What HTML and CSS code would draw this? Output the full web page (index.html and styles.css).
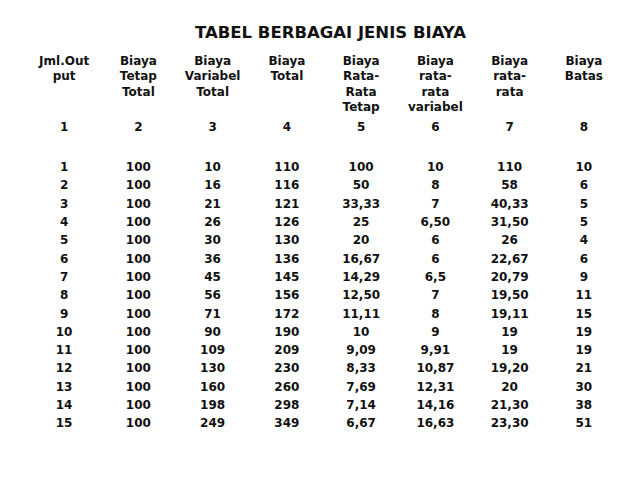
FILE: index.html
```html
<!DOCTYPE html>
<html lang="id">
<head>
<meta charset="utf-8">
<title>Tabel Berbagai Jenis Biaya</title>
<link rel="stylesheet" href="styles.css">
</head>
<body>
<div class="page">
  <h1 class="title">TABEL BERBAGAI JENIS BIAYA</h1>
  <table class="cost-table">
    <thead>
      <tr class="head-row">
        <th>Jml.Out<br>put</th>
        <th>Biaya<br>Tetap<br>Total</th>
        <th>Biaya<br>Variabel<br>Total</th>
        <th>Biaya<br>Total</th>
        <th>Biaya<br>Rata-<br>Rata<br>Tetap</th>
        <th>Biaya<br>rata-<br>rata<br>variabel</th>
        <th>Biaya<br>rata-<br>rata</th>
        <th>Biaya<br>Batas</th>
      </tr>
      <tr class="num-row">
        <th>1</th><th>2</th><th>3</th><th>4</th><th>5</th><th>6</th><th>7</th><th>8</th>
      </tr>
      <tr class="spacer-row"><th colspan="8"></th></tr>
    </thead>
    <tbody>
      <tr><td>1</td><td>100</td><td>10</td><td>110</td><td>100</td><td>10</td><td>110</td><td>10</td></tr>
      <tr><td>2</td><td>100</td><td>16</td><td>116</td><td>50</td><td>8</td><td>58</td><td>6</td></tr>
      <tr><td>3</td><td>100</td><td>21</td><td>121</td><td>33,33</td><td>7</td><td>40,33</td><td>5</td></tr>
      <tr><td>4</td><td>100</td><td>26</td><td>126</td><td>25</td><td>6,50</td><td>31,50</td><td>5</td></tr>
      <tr><td>5</td><td>100</td><td>30</td><td>130</td><td>20</td><td>6</td><td>26</td><td>4</td></tr>
      <tr><td>6</td><td>100</td><td>36</td><td>136</td><td>16,67</td><td>6</td><td>22,67</td><td>6</td></tr>
      <tr><td>7</td><td>100</td><td>45</td><td>145</td><td>14,29</td><td>6,5</td><td>20,79</td><td>9</td></tr>
      <tr><td>8</td><td>100</td><td>56</td><td>156</td><td>12,50</td><td>7</td><td>19,50</td><td>11</td></tr>
      <tr><td>9</td><td>100</td><td>71</td><td>172</td><td>11,11</td><td>8</td><td>19,11</td><td>15</td></tr>
      <tr><td>10</td><td>100</td><td>90</td><td>190</td><td>10</td><td>9</td><td>19</td><td>19</td></tr>
      <tr><td>11</td><td>100</td><td>109</td><td>209</td><td>9,09</td><td>9,91</td><td>19</td><td>19</td></tr>
      <tr><td>12</td><td>100</td><td>130</td><td>230</td><td>8,33</td><td>10,87</td><td>19,20</td><td>21</td></tr>
      <tr><td>13</td><td>100</td><td>160</td><td>260</td><td>7,69</td><td>12,31</td><td>20</td><td>30</td></tr>
      <tr><td>14</td><td>100</td><td>198</td><td>298</td><td>7,14</td><td>14,16</td><td>21,30</td><td>38</td></tr>
      <tr><td>15</td><td>100</td><td>249</td><td>349</td><td>6,67</td><td>16,63</td><td>23,30</td><td>51</td></tr>
    </tbody>
  </table>
</div>
</body>
</html>
```

FILE: styles.css
```css
html, body {
  margin: 0;
  padding: 0;
  background: #ffffff;
}

body {
  font-family: "DejaVu Sans", Verdana, sans-serif;
  font-weight: bold;
  color: #111111;
}

.page {
  width: 638px;
  padding: 23px 0 0 27px;
  box-sizing: border-box;
}

.title {
  width: 594px;
  margin: 0 0 11px 0;
  padding-left: 13px;
  box-sizing: border-box;
  font-size: 16.5px;
  line-height: 20px;
  font-weight: bold;
  text-align: center;
}

.cost-table {
  width: 594px;
  table-layout: fixed;
  border-collapse: collapse;
  border-spacing: 0;
  font-size: 12px;
}

.cost-table th,
.cost-table td {
  padding: 0;
  text-align: center;
  font-weight: bold;
  white-space: nowrap;
}

.head-row th {
  vertical-align: top;
  line-height: 15.3px;
  height: 61px;
}

.num-row th {
  line-height: 25px;
  height: 25px;
}

.spacer-row th {
  height: 18px;
}

.cost-table td {
  line-height: 18.3px;
  height: 18.3px;
}
```
